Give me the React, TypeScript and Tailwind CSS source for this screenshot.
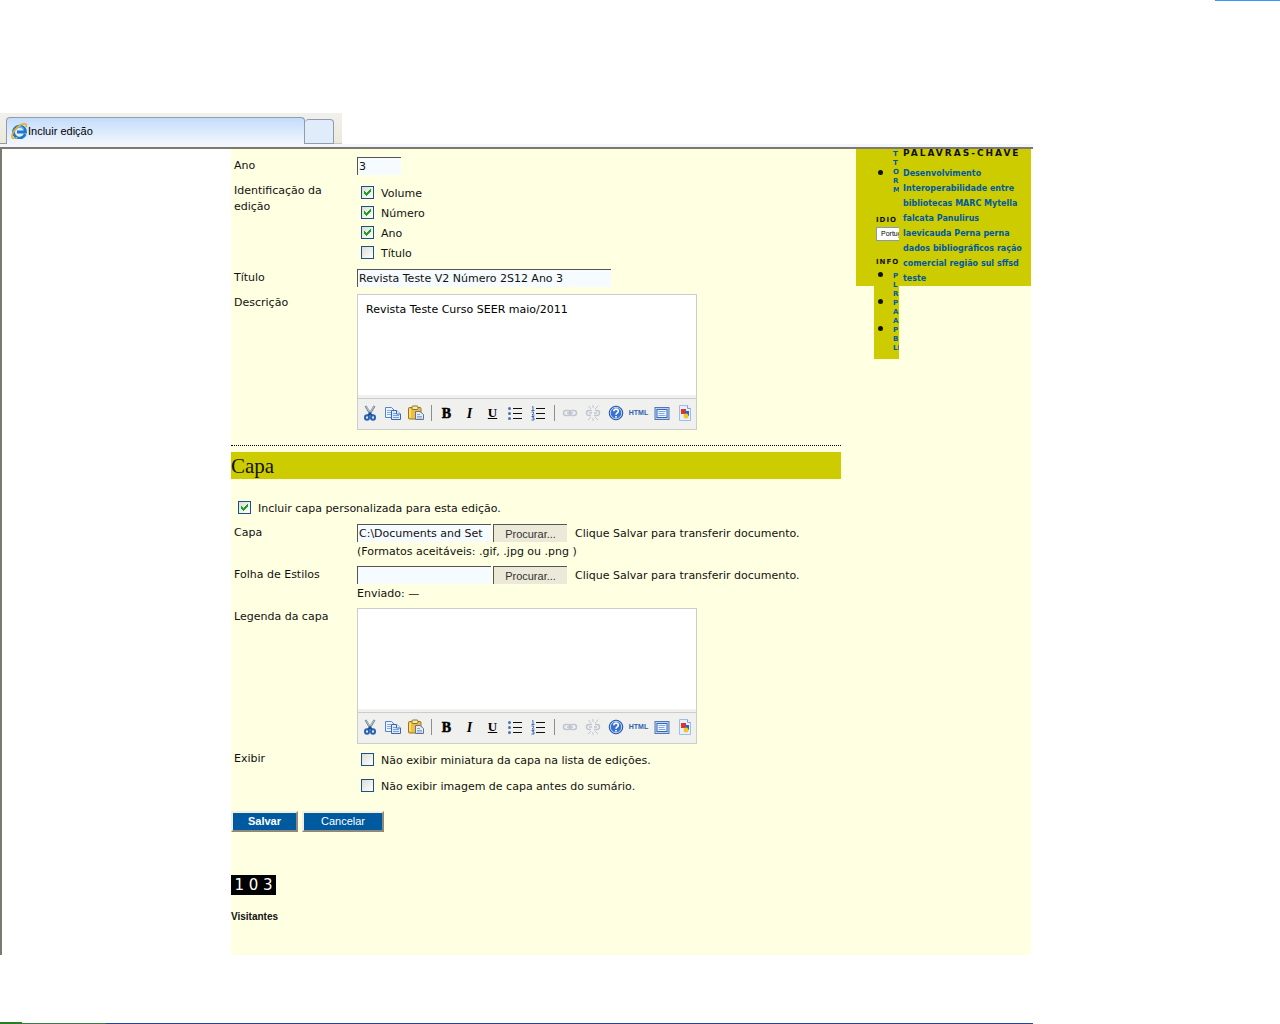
import React, { useState } from 'react';

const INPUT = 'h-[18px] border-t border-l border-[#555555] bg-[#f5fbff] px-px text-[11px] leading-4 text-[#111111] outline-none';

const Check: React.FC<{ label: string; checked?: boolean }> = ({ label, checked = false }) => {
  const [on, setOn] = useState(checked);
  return (
    <label className="flex items-start gap-[7px]">
      <span className="grid shrink-0">
        <input
          type="checkbox"
          checked={on}
          onChange={(e) => setOn(e.target.checked)}
          className="col-start-1 row-start-1 h-[13px] w-[13px] appearance-none border border-[#1c5180] bg-gradient-to-br from-[#dcdcd7] to-white"
        />
        {on && (
          <svg viewBox="0 0 13 13" className="pointer-events-none col-start-1 row-start-1 h-[13px] w-[13px]" fill="#21a121" shapeRendering="crispEdges">
            <path d="M3 5h1v1h1v1h1V6h1V5h1V4h1V3h1v3H9v1H8v1H7v1H6v1H5V9H4V8H3z" />
          </svg>
        )}
      </span>
      <span className="leading-4">{label}</span>
    </label>
  );
};

interface RowProps {
  label: string;
  htmlFor?: string;
  children: React.ReactNode;
}

const Row: React.FC<RowProps> = ({ label, htmlFor, children }) => (
  <div className="flex items-start">
    <label htmlFor={htmlFor} className="w-[126px] shrink-0 pt-px pr-4 pl-[3px] leading-4">{label}</label>
    <div className="min-w-0 flex-1">{children}</div>
  </div>
);

const CutIcon = () => (
  <svg width="16" height="16" viewBox="0 0 16 16" fill="none">
    <path d="M3.500 1l5.500 9M12.500 1L7 10" stroke="#74859a" strokeWidth="2.200" />
    <path d="M4 1.500l3.500 5.500M12 1.500L8.500 7" stroke="#c9d4df" strokeWidth="0.800" />
    <ellipse cx="5" cy="12.500" rx="2" ry="2.200" stroke="#2563b5" strokeWidth="2" />
    <ellipse cx="11" cy="12.500" rx="2" ry="2.200" stroke="#2563b5" strokeWidth="2" />
    <path d="M6 10.500L8 8.500l2 2" stroke="#1d4f96" strokeWidth="2" />
  </svg>
);

const CopyIcon = () => (
  <svg width="16" height="16" viewBox="0 0 16 16">
    <path d="M.5 2.500h6l3 3v7h-9z" fill="#eaf3ff" stroke="#5a83c4" />
    <path d="M2 5.500h4M2 7.500h5M2 9.500h4" stroke="#86aee6" />
    <path d="M6.500 5.500h5l4 3.500v5.500h-9z" fill="#dcebff" stroke="#3c66b0" />
    <path d="M11.500 5.500V9h4" fill="#fff" stroke="#3c66b0" />
    <path d="M8 8.500h3M8 10.500h6M8 12.500h6" stroke="#78a2df" />
  </svg>
);

const PasteIcon = () => (
  <svg width="16" height="16" viewBox="0 0 16 16">
    <rect x=".5" y="2.500" width="12.500" height="11.500" rx="1" fill="#f1bf3c" stroke="#9b741c" />
    <path d="M2 4v8.500" stroke="#ffe48a" strokeWidth="1.500" />
    <rect x="4" y="1" width="6" height="3.500" rx="1" fill="#f7e9a8" stroke="#8b7430" />
    <path d="M7.500 6.500h4.500l3.500 3v5h-8z" fill="#e3ecf8" stroke="#5c7698" />
    <path d="M9 9.500h3M9 11.500h5M9 13h5" stroke="#8fa8c8" />
  </svg>
);

const BulletsIcon = () => (
  <svg width="16" height="16" viewBox="0 0 16 16">
    <path d="M5 3.500h9M5 8.500h9M5 13.500h9" stroke="#111" />
    <g fill="#4a6fb5">
      <circle cx="1.500" cy="3.500" r="1.500" />
      <circle cx="1.500" cy="8.500" r="1.500" />
      <circle cx="1.500" cy="13.500" r="1.500" />
    </g>
  </svg>
);

const NumbersIcon = () => (
  <svg width="16" height="16" viewBox="0 0 16 16" fill="none">
    <path d="M5 3.500h9M5 8.500h9M5 13.500h9" stroke="#111" />
    <path d="M1 2l1-.5v4M.5 5.500h3M.5 7h2v1.500L1 10h2.500M.5 11.500H3L1.500 13H3v2H.5" stroke="#3d68b8" />
  </svg>
);

const LinkIcon = () => (
  <svg width="16" height="16" viewBox="0 0 16 16" fill="none" stroke="#c0c5d2" strokeWidth="1.500">
    <rect x="1.500" y="5.500" width="7" height="5" rx="2.500" />
    <rect x="7.500" y="5.500" width="7" height="5" rx="2.500" />
    <path d="M5 8h6" />
  </svg>
);

const UnlinkIcon = () => (
  <svg width="16" height="16" viewBox="0 0 16 16" fill="none" stroke="#c0c5d2" strokeWidth="1.500">
    <path d="M7 5.500H4a2.500 2.500 0 000 5h2M4 8h3M9 10.500h3a2.500 2.500 0 000-5h-2M9 8h3" />
    <path d="M8 0v3M3.500 1l2.500 3M13.500.5L10 4M8 13v3M3 15l3-3M13 15l-3-3" strokeWidth="1" />
  </svg>
);

const HelpIcon = () => (
  <svg width="16" height="16" viewBox="0 0 16 16" fill="none">
    <circle cx="8" cy="8" r="6.800" fill="#3871cf" stroke="#2452a4" />
    <circle cx="8" cy="8" r="5.700" stroke="#bcd6fb" />
    <path d="M5.800 6.300c0-3 4.600-2.800 4.500 0C10.300 8 8 7.800 8 9.700M8 11v1.600" stroke="#fff" strokeWidth="1.700" />
  </svg>
);

const PreviewIcon = () => (
  <svg width="16" height="16" viewBox="0 0 16 16">
    <rect x="1" y="2.500" width="14" height="12" fill="#b9d3f6" stroke="#5377ae" />
    <rect x="3" y="4.500" width="10" height="8" fill="#eef6ff" stroke="#3667b8" />
    <path d="M4.500 6.500h7M4.500 8.500h6M4.500 10.500h7" stroke="#7fa6e6" />
  </svg>
);

const ImageIcon = () => (
  <svg width="16" height="16" viewBox="0 0 16 16">
    <path d="M2.500.5h8l3 3v12h-11z" fill="#e6f1ff" stroke="#a3bde0" />
    <path d="M10.500.5v3h3" fill="#fff" stroke="#7fa2d4" />
    <rect x="4" y="4" width="5" height="5" fill="#e8321c" />
    <path d="M8 6h4v5H8z" fill="#2364d8" />
    <circle cx="9" cy="11" r="2.500" fill="#f7c51e" />
  </svg>
);

const Divider = () => (
  <span className="flex w-2 justify-center"><span className="h-4 w-px bg-[#8a8d96]" /></span>
);

const TOOLS = [
  { name: 'Recortar', icon: <CutIcon /> },
  { name: 'Copiar', icon: <CopyIcon /> },
  { name: 'Colar', icon: <PasteIcon /> },
  null,
  { name: 'Negrito', icon: <b className="font-['Liberation_Serif',serif] text-[14px] text-black [-webkit-text-stroke:0.500px]">B</b> },
  { name: 'Itálico', icon: <b className="font-['Liberation_Serif',serif] text-[14px] text-black italic">I</b> },
  { name: 'Sublinhado', icon: <b className="font-['Liberation_Serif',serif] text-[13px] text-black underline">U</b> },
  { name: 'Lista', icon: <BulletsIcon /> },
  { name: 'Lista numerada', icon: <NumbersIcon /> },
  null,
  { name: 'Link', icon: <LinkIcon /> },
  { name: 'Remover link', icon: <UnlinkIcon /> },
  { name: 'Ajuda', icon: <HelpIcon /> },
  { name: 'Editar HTML', icon: <span className="font-['Liberation_Sans',sans-serif] text-[7px] font-bold text-[#2f5fae]">HTML</span> },
  { name: 'Tela cheia', icon: <PreviewIcon /> },
  { name: 'Imagem', icon: <ImageIcon /> },
];

const Editor: React.FC<{ id: string; text?: string }> = ({ id, text = '' }) => (
  <div className="w-[340px] max-w-full border border-[#cccccc] bg-[#f0f0ee]">
    <textarea
      id={id}
      defaultValue={text}
      className="block h-[100px] w-full resize-none bg-white px-2 py-[7px] text-[11px] leading-4 text-black outline-none"
    />
    <div className="mt-[3px] flex h-[31px] items-center border-t border-[#cccccc] pb-[2px]">
      {TOOLS.map((t, i) =>
        t ? (
          <button key={t.name} type="button" aria-label={t.name} className="flex h-[22px] w-[23px] items-center justify-center">
            {t.icon}
          </button>
        ) : (
          <Divider key={i} />
        )
      )}
    </div>
  </div>
);

const FileField: React.FC<{ id: string; value?: string; note: string }> = ({ id, value = '', note }) => (
  <div>
    <div className="flex items-start">
      <input id={id} type="text" defaultValue={value} className={`${INPUT} w-[134px]`} />
      <button
        type="button"
        className="ml-[2px] h-[18px] w-[74px] border-t border-l border-[#555555] bg-[#ece9d8] font-['Liberation_Sans',sans-serif] text-[11px] leading-4 text-[#333333]"
      >
        Procurar...
      </button>
      <span className="ml-2 h-[18px] pt-[2px] leading-4">Clique Salvar para transferir documento.</span>
    </div>
    <div className="pt-[2px] leading-4">{note}</div>
  </div>
);

interface SideLinksProps {
  items: string[];
  align?: string;
}

const SideLinks: React.FC<SideLinksProps> = ({ items, align = 'items-center' }) => (
  <ul>
    {items.map((item) => (
      <li key={item} className={`flex ${align}`}>
        <span className="ml-1 h-[5px] w-[5px] shrink-0 rounded-full bg-[#111111]" />
        <a href="#" className="ml-[10px] shrink-0 text-[7px] leading-[9px] font-bold whitespace-pre text-[#0059a0]">{item}</a>
      </li>
    ))}
  </ul>
);

const Sidebar = () => (
  <aside className="flex h-[137px] w-[175px] shrink-0 items-start bg-[#cccc00] pl-[18px]">
    <nav className="h-[210px] w-[25px] shrink-0 overflow-hidden bg-[#cccc00] pt-px">
      <SideLinks items={['T\nT\nO\nR\nM']} />
      <h4 className="mt-[21px] ml-[2px] text-[7px] leading-[9px] font-bold tracking-[1px] text-[#111111]">IDIO</h4>
      <select aria-label="Idioma" className="mt-[2px] ml-[2px] block h-[14px] w-[80px] appearance-none border border-[#7f9db9] bg-white pl-1 font-['Liberation_Sans',sans-serif] text-[7px] text-black">
        <option>Português</option>
      </select>
      <h4 className="mt-[17px] mb-[5px] ml-[2px] text-[7px] leading-[9px] font-bold tracking-[1px] text-[#111111]">INFO</h4>
      <SideLinks items={['P\nL\nR', 'P\nA\nA', 'P\nB\nLI']} align="items-start" />
    </nav>
    <section className="min-w-0 flex-1 pl-1">
      <h3 className="h-[17px] text-[9px] leading-2 font-bold tracking-[2px] whitespace-nowrap text-[#111111]">PALAVRAS-CHAVE</h3>
      <p className="text-[8px] leading-[15px] font-bold text-[#0059a0]">
        <a href="#">Desenvolvimento</a><br />
        <a href="#">Interoperabilidade entre</a><br />
        <a href="#">bibliotecas</a> <a href="#">MARC</a> <a href="#">Mytella</a><br />
        <a href="#">falcata</a> <a href="#">Panulirus</a><br />
        <a href="#">laevicauda</a> <a href="#">Perna perna</a><br />
        <a href="#">dados bibliográficos</a> <a href="#">ração</a><br />
        <a href="#">comercial</a> <a href="#">região sul</a> <a href="#">sffsd</a><br />
        <a href="#">teste</a>
      </p>
    </section>
  </aside>
);

const TabBar = () => (
  <div className="border-b-[3px] border-[#f2f5fb]">
    <div className="flex h-[31px] w-[342px] items-end bg-gradient-to-b from-[#f1f0ec] to-[#ece9dc]">
      <span className="w-[6px] border-b border-[#919b9c]" />
      <div className="flex h-[27px] w-[299px] items-center gap-px rounded-t border border-b-0 border-[#919bb0] bg-gradient-to-b from-[#c3dcfb] to-[#f2f6fd] pl-1">
        <svg width="16" height="16" viewBox="0 0 16 16" fill="none">
          <path d="M14.200 11A6 6 0 1114.500 9H6" stroke="#1b78cf" strokeWidth="2.800" />
          <path d="M4.500 6.500a4.500 4.500 0 018-.5" stroke="#5dbcf2" strokeWidth="1.400" />
          <path d="M2 15.500C-1.500 13 4.500 4 11 1.300c3.500-1.300 5.300 0 3.800 2.900M2 15.500c1.300.5 3-.2 4.500-1.200" stroke="#e9ad24" strokeWidth="1.600" />
        </svg>
        <span className="font-['Liberation_Sans',sans-serif] text-[11px] text-black">Incluir edição</span>
      </div>
      <span className="h-[25px] w-[29px] rounded-t border border-l-0 border-[#919bb0] bg-[#e0ecfa]" />
      <span className="flex-1 border-b border-[#c8c8c0]" />
    </div>
  </div>
);

const IssueForm = () => (
  <form className="w-[610px] shrink-0" onSubmit={(e) => e.preventDefault()}>
    <div className="flex flex-col gap-[7px] pt-2">
      <Row label="Ano" htmlFor="ano">
        <input id="ano" type="text" defaultValue="3" className={`${INPUT} block w-[44px]`} />
      </Row>
      <Row label="Identificação da edição">
        <div className="flex h-20 flex-col gap-1 pt-1 pl-1">
          <Check label="Volume" checked />
          <Check label="Número" checked />
          <Check label="Ano" checked />
          <Check label="Título" />
        </div>
      </Row>
      <Row label="Título" htmlFor="titulo">
        <input id="titulo" type="text" defaultValue="Revista Teste V2 Número 2S12 Ano 3" className={`${INPUT} block w-[254px]`} />
      </Row>
      <Row label="Descrição" htmlFor="descricao">
        <Editor id="descricao" text="Revista Teste Curso SEER maio/2011" />
      </Row>
    </div>

    <div className="mt-[15px] border-t border-dotted border-black" />
    <h3 className="mt-[6px] h-[27px] bg-[#cccc00] font-['Liberation_Serif',serif] text-[21px] leading-7 text-[#111111]">Capa</h3>

    <div className="mt-[22px] pl-[7px]">
      <Check label="Incluir capa personalizada para esta edição." checked />
    </div>
    <div className="mt-[7px] flex flex-col gap-[6px]">
      <Row label="Capa" htmlFor="capa">
        <FileField id="capa" value="C:\Documents and Set" note="(Formatos aceitáveis: .gif, .jpg ou .png )" />
      </Row>
      <Row label="Folha de Estilos" htmlFor="estilos">
        <FileField id="estilos" note="Enviado: —" />
      </Row>
      <Row label="Legenda da capa" htmlFor="legenda">
        <Editor id="legenda" />
      </Row>
      <Row label="Exibir">
        <div className="flex flex-col gap-[10px] pt-[3px] pl-1">
          <Check label="Não exibir miniatura da capa na lista de edições." />
          <Check label="Não exibir imagem de capa antes do sumário." />
        </div>
      </Row>
    </div>

    <div className="mt-4 flex gap-1 font-['Liberation_Sans',sans-serif] text-[11px] text-white">
      <button type="submit" className="h-[21px] w-[67px] border-2 border-t-[#f1efe2] border-r-[#8d8a7d] border-b-[#8d8a7d] border-l-[#f1efe2] bg-[#005aa0] font-bold">
        Salvar
      </button>
      <button type="button" className="h-[21px] w-[82px] border-2 border-t-[#f1efe2] border-r-[#8d8a7d] border-b-[#8d8a7d] border-l-[#f1efe2] bg-[#005aa0]">
        Cancelar
      </button>
    </div>

    <div className="mt-[43px] h-5 w-[45px] bg-black text-center text-[15px] leading-5 text-white">1 0 3</div>
    <div className="mt-[14px] pb-[30px] font-['Liberation_Sans',sans-serif] text-[10px] leading-4 font-bold text-[#111111]">Visitantes</div>
  </form>
);

export default function App() {
  return (
    <div className="flex min-h-screen flex-col bg-white font-['DejaVu_Sans',Verdana,sans-serif] text-[11px] text-[#111111]">
      <div className="h-px w-[65px] self-end bg-[#3e94fb]" />
      <div className="mt-28 mr-[247px]">
        <TabBar />
        <main className="border-t-2 border-l-2 border-[#7b7970] pr-[2px]">
          <div className="ml-auto flex max-w-[800px] justify-between bg-[#ffffe1]">
            <IssueForm />
            <Sidebar />
          </div>
        </main>
      </div>
      <footer className="mt-auto mr-[247px] flex h-[2px] items-end">
        <span className="h-[2px] w-[22px] bg-[#267f26]" />
        <span className="h-px w-[84px] bg-[#3a7a45]" />
        <span className="h-px flex-1 bg-[#24459c]" />
      </footer>
    </div>
  );
}
